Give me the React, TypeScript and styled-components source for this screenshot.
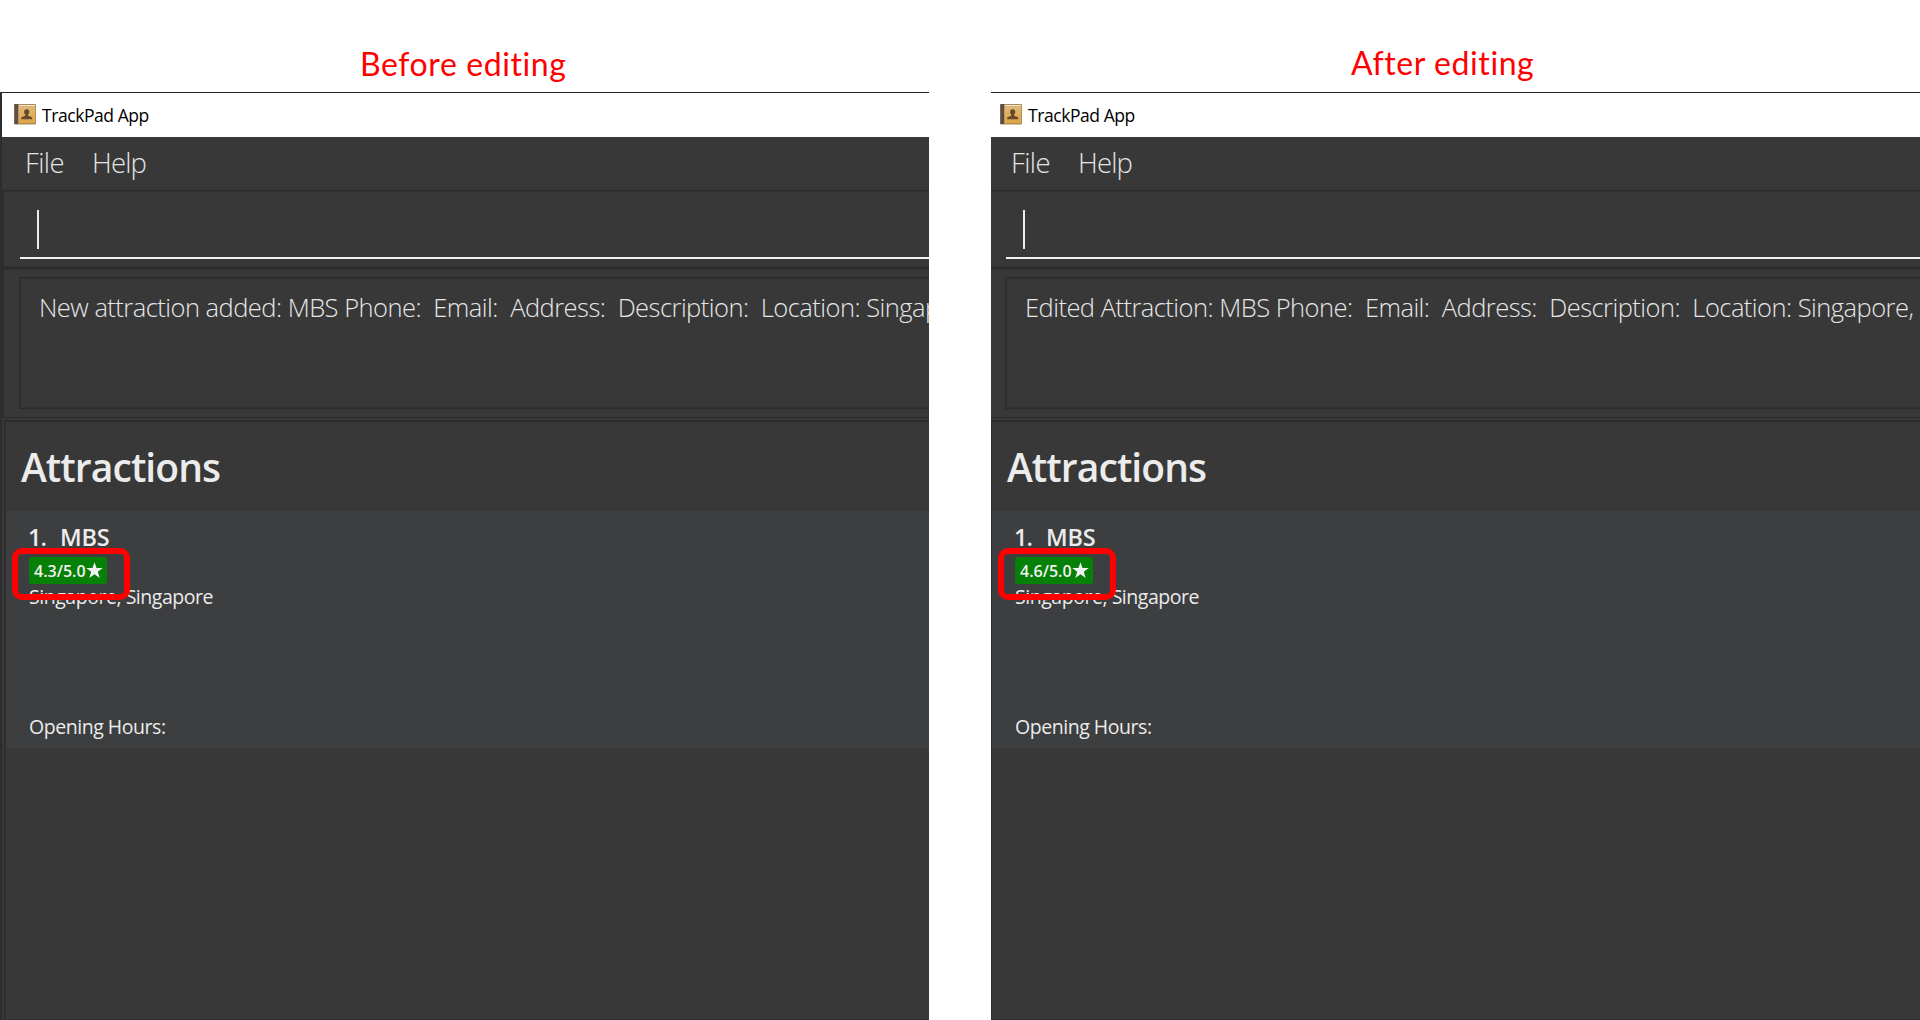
import React from "react";
import styled, { createGlobalStyle } from "styled-components";

const GlobalStyle = createGlobalStyle`
  * { box-sizing: border-box; }
  body { margin: 0; background: #fff; overflow: hidden; }
`;

const Page = styled.main`
  display: flex;
  gap: 62px;
  width: 1920px;
  height: 1020px;
  background: #fff;
  font-family: "Open Sans", "Noto Sans", sans-serif;
  white-space: pre;
`;

const Column = styled.section`
  display: flex;
  flex-direction: column;
  width: 929px;
  height: 1020px;
  overflow: hidden;
`;

const Caption = styled.h2<{ $indent: number; $top: number }>`
  flex: none;
  margin: 0;
  height: 92px;
  padding: ${(p) => p.$top}px 0 0 ${(p) => p.$indent}px;
  font: 400 32px/40px Lato, sans-serif;
  letter-spacing: 0.58px;
  color: #ff0000;
`;

const Window = styled.div<{ $cut: number }>`
  flex: 1;
  display: flex;
  flex-direction: column;
  margin-left: ${(p) => -p.$cut}px;
  border-left: 2px solid #2b2e2e;
  background: #383838;
`;

const TitleBar = styled.header`
  display: flex;
  align-items: center;
  gap: 6px;
  height: 45px;
  padding-left: 12px;
  border-top: 1px solid #222;
  background: #fff;
  color: #000;
  font-size: 17.5px;
  letter-spacing: -0.44px;

  svg {
    margin-top: -2px;
  }
`;

const MenuBar = styled.nav`
  display: flex;
  gap: 28px;
  height: 53px;
  padding-left: 23px;
  font-size: 27.5px;
  font-weight: 300;
  line-height: 52px;
  color: #e4e4e4;
`;

const MenuItem = styled.span<{ $spacing: number }>`
  letter-spacing: ${(p) => p.$spacing}px;
`;

const CommandPane = styled.div`
  height: 78px;
  padding: 18px 0 0 17px;
  border: 1px solid #2b2b2b;
  border-width: 1px 0 1px 1px;
  box-shadow: inset 1px 1px 0 #313131, inset 0 -1px 0 #313131;
`;

const CommandField = styled.div`
  height: 50px;
  padding: 1px 0 0 17px;
  border-bottom: 2px solid #f2f2f2;
`;

const Caret = styled.div`
  width: 2px;
  height: 39px;
  background: #ececec;
`;

const ResultPane = styled.div`
  height: 150px;
  padding: 8px 0 0 16px;
  border: 1px solid #2b2b2b;
  border-width: 1px 0 1px 1px;
  box-shadow: inset 1px 1px 0 #313131;
`;

const ResultBox = styled.div`
  height: 132px;
  padding: 11px 0 0 19px;
  border: 1px solid #2b2b2b;
  border-right: 0;
  box-shadow: inset 1px 1px 0 #323232, inset 0 -1px 0 #323232;
  font-size: 25.5px;
  font-weight: 300;
  line-height: 37px;
  letter-spacing: -0.54px;
  word-spacing: 0.1px;
  color: #e6e6e6;
`;

const ListPane = styled.div`
  flex: 1;
  margin: 2px 0 0 2px;
  border: 2px solid #2e2e2e;
  border-width: 2px 0 1px 2px;
`;

const ListTitle = styled.h1`
  margin: 0;
  height: 89px;
  padding-left: 15px;
  font-size: 39px;
  font-weight: 600;
  line-height: 90px;
  letter-spacing: -0.93px;
  color: #ececec;
`;

const Card = styled.article`
  display: flex;
  flex-direction: column;
  align-items: flex-start;
  height: 237px;
  padding: 9px 0 0 23px;
  background: #3c3e3f;
  color: #ececec;
`;

const CardHeading = styled.div`
  display: flex;
  height: 32px;
  margin-left: -1px;
  font-size: 23.5px;
  font-weight: 600;
  line-height: 34px;
  letter-spacing: -0.2px;
`;

const CardIndex = styled.span`
  width: 32px;
  letter-spacing: -1px;
`;

const RatingWrap = styled.div`
  position: relative;
  margin: 5px 0 0;
`;

const Rating = styled.div`
  display: flex;
  align-items: center;
  width: 78px;
  height: 27px;
  padding-left: 5px;
  border-radius: 3px;
  background: #078007;
  color: #f2f2f2;
  font-size: 16px;
  font-weight: 600;
`;

const RatingValue = styled.span`
  width: 52px;
`;

const Highlight = styled.div`
  position: absolute;
  left: -17px;
  top: -9px;
  width: 118px;
  height: 52px;
  border: 6px solid #ff0000;
  border-radius: 10px;
`;

const CardLine = styled.div<{ $gap: number }>`
  margin-top: ${(p) => p.$gap}px;
  height: 26px;
  font-size: 19.5px;
  line-height: 26px;
  letter-spacing: -0.46px;
`;

function BookIcon() {
  return (
    <svg width="22" height="21" viewBox="0 0 22 21">
      <defs>
        <linearGradient id="cover" x1="0" y1="0" x2="0" y2="1">
          <stop offset="0" stopColor="#e2b876" />
          <stop offset="1" stopColor="#dda645" />
        </linearGradient>
      </defs>
      <rect width="22" height="20.5" rx="1" fill="#a9884f" />
      <rect x="0.5" width="3.5" height="20" fill="#5e4c48" />
      <rect x="4.6" y="2.6" width="16.6" height="16.6" fill="url(#cover)" />
      <rect x="5" y="1" width="16" height="1.3" fill="#f6e9cc" />
      <path
        d="M12.700 5.200c1.700 0 2.600 1 2.600 2.500 0 1.400-.6 2.200-1.200 2.900v1.100l3.200 1.200c.8.4.9 1.100.9 2.300h-11c0-1.200.1-1.900.9-2.300l3.200-1.200v-1.100c-.6-.7-1.200-1.500-1.200-2.900 0-1.500.9-2.500 2.600-2.500z"
        fill="#65492f"
      />
    </svg>
  );
}

function StarIcon() {
  return (
    <svg width="17" height="17" viewBox="0 0 16 16">
      <path d="M8 .3l1.900 5.400h5.900l-4.700 3.500 1.800 5.900L8 11.600l-4.900 3.500 1.800-5.900L.2 5.700h5.900z" fill="#f2f2f2" />
    </svg>
  );
}

interface Shot {
  caption: string;
  indent: number;
  top: number;
  cut: number;
  result: string;
  rating: string;
}

const shots: Shot[] = [
  {
    caption: "Before editing",
    indent: 360,
    top: 44,
    cut: 0,
    result: "New attraction added: MBS Phone:  Email:  Address:  Description:  Location: Singapore,",
    rating: "4.3/5.0",
  },
  {
    caption: "After editing",
    indent: 360,
    top: 43,
    cut: 5,
    result: "Edited Attraction: MBS Phone:  Email:  Address:  Description:  Location: Singapore,",
    rating: "4.6/5.0",
  },
];

function AppShot({ shot }: { shot: Shot }) {
  return (
    <Column>
      <Caption $indent={shot.indent} $top={shot.top}>
        {shot.caption}
      </Caption>
      <Window $cut={shot.cut}>
        <TitleBar>
          <BookIcon />
          <span>TrackPad App</span>
        </TitleBar>
        <MenuBar>
          <MenuItem $spacing={-0.6}>File</MenuItem>
          <MenuItem $spacing={-0.85}>Help</MenuItem>
        </MenuBar>
        <CommandPane>
          <CommandField>
            <Caret />
          </CommandField>
        </CommandPane>
        <ResultPane>
          <ResultBox>{shot.result}</ResultBox>
        </ResultPane>
        <ListPane>
          <ListTitle>Attractions</ListTitle>
          <Card>
            <CardHeading>
              <CardIndex>1.</CardIndex>
              <span>MBS</span>
            </CardHeading>
            <RatingWrap>
              <Rating>
                <RatingValue>{shot.rating}</RatingValue>
                <StarIcon />
              </Rating>
              <Highlight />
            </RatingWrap>
            <CardLine $gap={0}>Singapore, Singapore</CardLine>
            <CardLine $gap={104}>Opening Hours:</CardLine>
          </Card>
        </ListPane>
      </Window>
    </Column>
  );
}

export default function App() {
  return (
    <Page>
      <GlobalStyle />
      {shots.map((shot) => (
        <AppShot key={shot.caption} shot={shot} />
      ))}
    </Page>
  );
}
